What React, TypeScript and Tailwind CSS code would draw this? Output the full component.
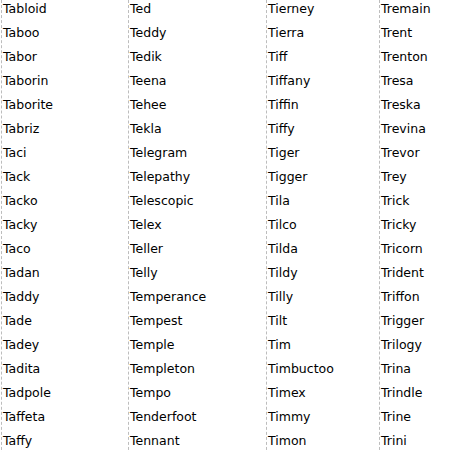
const columns: { width: string; names: string[] }[] = [
  {
    width: "w-[127px]",
    names: ["Tabloid", "Taboo", "Tabor", "Taborin", "Taborite", "Tabriz", "Taci", "Tack", "Tacko", "Tacky", "Taco", "Tadan", "Taddy", "Tade", "Tadey", "Tadita", "Tadpole", "Taffeta", "Taffy"],
  },
  {
    width: "w-[138px]",
    names: ["Ted", "Teddy", "Tedik", "Teena", "Tehee", "Tekla", "Telegram", "Telepathy", "Telescopic", "Telex", "Teller", "Telly", "Temperance", "Tempest", "Temple", "Templeton", "Tempo", "Tenderfoot", "Tennant"],
  },
  {
    width: "w-[113px]",
    names: ["Tierney", "Tierra", "Tiff", "Tiffany", "Tiffin", "Tiffy", "Tiger", "Tigger", "Tila", "Tilco", "Tilda", "Tildy", "Tilly", "Tilt", "Tim", "Timbuctoo", "Timex", "Timmy", "Timon"],
  },
  {
    width: "w-[70px]",
    names: ["Tremain", "Trent", "Trenton", "Tresa", "Treska", "Trevina", "Trevor", "Trey", "Trick", "Tricky", "Tricorn", "Trident", "Triffon", "Trigger", "Trilogy", "Trina", "Trindle", "Trine", "Trini"],
  },
];

export default function App() {
  return (
    <div className="w-[449px] h-[452px] overflow-hidden bg-white pl-px flex font-['DejaVu_Sans',sans-serif] text-[12.5px] text-black">
      {columns.map((col, i) => (
        <div key={i} className={`${col.width} shrink-0 h-[460px] border-l border-dashed border-[#bdbdbd] pl-px`}>
          {col.names.map((name) => (
            <div key={name} className="h-6 leading-[18px] whitespace-nowrap">
              {name}
            </div>
          ))}
        </div>
      ))}
    </div>
  );
}
